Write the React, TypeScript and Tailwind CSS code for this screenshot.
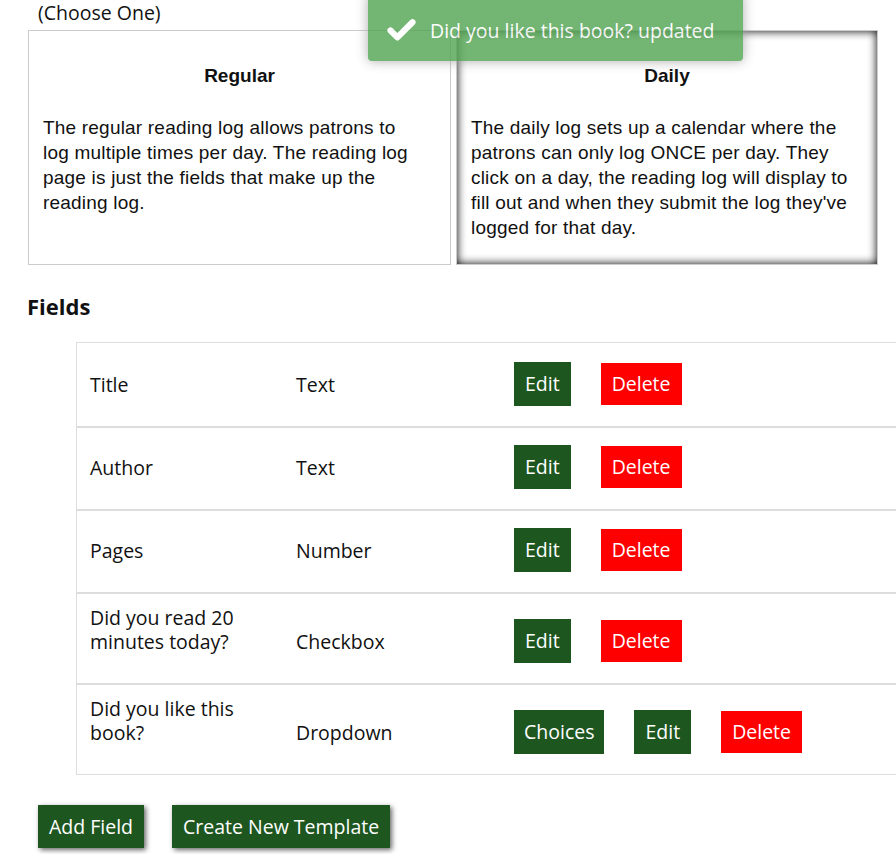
import { Check } from "lucide-react";

const fields = [
  { name: "Title", type: "Text", choices: false, tall: false },
  { name: "Author", type: "Text", choices: false, tall: false },
  { name: "Pages", type: "Number", choices: false, tall: false },
  { name: "Did you read 20 minutes today?", type: "Checkbox", choices: false, tall: true },
  { name: "Did you like this book?", type: "Dropdown", choices: true, tall: true },
];

const ubuntu = { fontFamily: '"Open Sans", "Noto Sans", sans-serif' };

const GreenButton = ({ label, wide }: { label: string; wide?: boolean }) => (
  <button className={`h-[44px] ${wide ? "px-[10px]" : "px-[11px]"} bg-[#1e561f] text-white text-[19.5px] leading-none`}>
    {label}
  </button>
);

const App = () => {
  return (
    <div className="relative w-[896px] h-[854px] overflow-hidden bg-white text-[#111]">
      {/* toast */}
      <div
        className="absolute left-[368px] top-[-6px] w-[375px] h-[67px] rounded-[4px] bg-[#51a351] opacity-80 shadow-[0_0_12px_#999] flex items-center pt-[6px] z-10"
        style={ubuntu}
      >
        <Check className="ml-[17px] w-[33px] h-[33px] text-white" strokeWidth={4.5} />
        <span className="ml-[12px] text-white text-[19.5px]">Did you like this book? updated</span>
      </div>

      <div className="pl-[38px] pt-[2px] text-[19.5px] leading-[22px]" style={ubuntu}>
        (Choose One)
      </div>

      <div className="flex gap-[5px] ml-[28px] mt-[6px]" style={{ fontFamily: '"Liberation Sans", Arial, sans-serif' }}>
        <div className="w-[423px] h-[235px] border border-[#ccc] px-[14px]">
          <h3 className="text-center font-bold text-[19px] mt-[31px]">Regular</h3>
          <p className="mt-[24px] text-[19px] leading-[25px] tracking-[0.2px]">
            The regular reading log allows patrons to
            <br />
            log multiple times per day. The reading log
            <br />
            page is just the fields that make up the
            <br />
            reading log.
          </p>
        </div>
        <div className="w-[422px] h-[235px] border border-[#ccc] px-[14px] shadow-[inset_0_0_10px_#000]">
          <h3 className="text-center font-bold text-[19px] mt-[31px]">Daily</h3>
          <p className="mt-[24px] text-[19px] leading-[25px] tracking-[0.2px] whitespace-nowrap">
            The daily log sets up a calendar where the
            <br />
            patrons can only log ONCE per day. They
            <br />
            click on a day, the reading log will display to
            <br />
            fill out and when they submit the log they've
            <br />
            logged for that day.
          </p>
        </div>
      </div>

      <div style={ubuntu}>
        <h2 className="ml-[27px] mt-[27px] text-[22px] font-bold leading-[28px]">Fields</h2>

        <div className="ml-[76px] mt-[22px] w-[900px] border border-[#ddd]">
          {fields.map((f, i) => (
            <div
              key={f.name}
              className={`grid grid-cols-[206px_218px_1fr] items-end ${i > 0 ? "border-t-2 border-[#ddd]" : ""} ${f.tall ? "h-[91px]" : "h-[83px]"}`}
            >
              <div className="pl-[13px] pr-[14px] pb-[29px] text-[19.5px] leading-[24px]">{f.name}</div>
              <div className="pl-[13px] pb-[29px] text-[19.5px] leading-[24px]">{f.type}</div>
              <div className="pl-[13px] pb-[20px] flex items-center gap-[30px]">
                {f.choices && <GreenButton label="Choices" wide />}
                <GreenButton label="Edit" />
                <button className="h-[42px] px-[11px] bg-[#ff0000] text-white text-[19.5px] leading-none">
                  Delete
                </button>
              </div>
            </div>
          ))}
        </div>

        <div className="ml-[38px] mt-[30px] flex gap-[28px]">
          <button className="h-[43px] px-[11px] bg-[#1e561f] text-white text-[19.5px] shadow-[2px_2px_5px_rgba(0,0,0,0.6)]">
            Add Field
          </button>
          <button className="h-[43px] px-[11px] bg-[#1e561f] text-white text-[19.5px] shadow-[2px_2px_5px_rgba(0,0,0,0.6)]">
            Create New Template
          </button>
        </div>
      </div>
    </div>
  );
};

export default App;
